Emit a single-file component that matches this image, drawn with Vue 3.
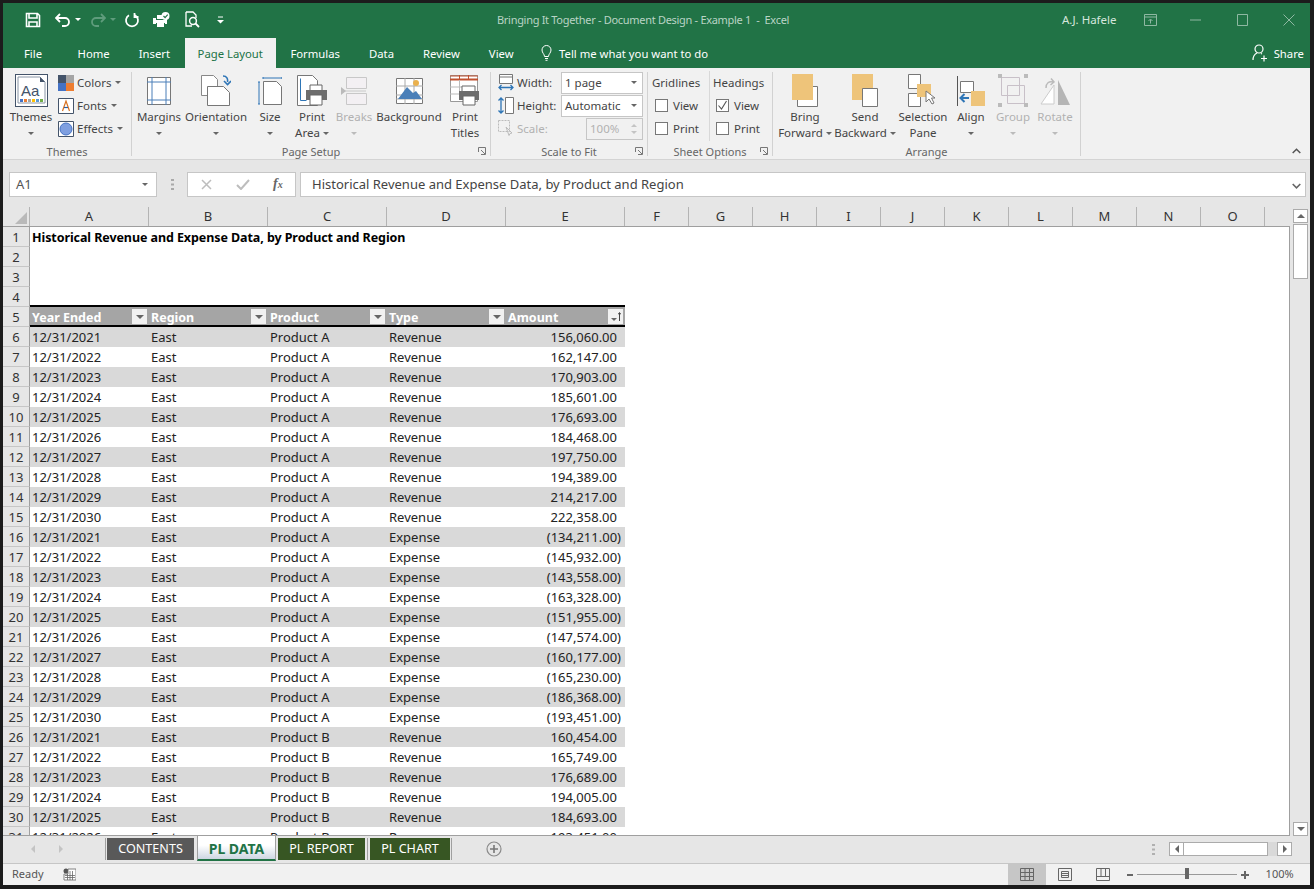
<script setup>
const tabs = ['Home', 'Insert', 'Page Layout', 'Formulas', 'Data', 'Review', 'View']
const columns = ['A', 'B', 'C', 'D', 'E', 'F', 'G', 'H', 'I', 'J', 'K', 'L', 'M', 'N', 'O']
const headers = ['Year Ended', 'Region', 'Product', 'Type', 'Amount']
const years = [2021, 2022, 2023, 2024, 2025, 2026, 2027, 2028, 2029, 2030]

const amounts = [
  '156,060.00', '162,147.00', '170,903.00', '185,601.00', '176,693.00',
  '184,468.00', '197,750.00', '194,389.00', '214,217.00', '222,358.00',
  '(134,211.00)', '(145,932.00)', '(143,558.00)', '(163,328.00)', '(151,955.00)',
  '(147,574.00)', '(160,177.00)', '(165,230.00)', '(186,368.00)', '(193,451.00)',
  '160,454.00', '165,749.00', '176,689.00', '194,005.00', '184,693.00', '193,451.00',
]

const rows = amounts.map((amount, i) => ({
  num: i + 6,
  date: `12/31/${years[i % 10]}`,
  product: i < 20 ? 'Product A' : 'Product B',
  type: i >= 10 && i < 20 ? 'Expense' : 'Revenue',
  amount,
  negative: amount.startsWith('('),
}))

const sheets = [
  { name: 'CONTENTS', cls: 'grey' },
  { name: 'PL DATA', cls: 'current' },
  { name: 'PL REPORT', cls: 'green' },
  { name: 'PL CHART', cls: 'green chart' },
]
</script>

<template>
  <div class="window">
    <!-- title bar -->
    <div class="titlebar">
      <svg class="q-save" width="16" height="16" viewBox="0 0 16 16"><path d="M1.500 1.500h11l2 2v11h-13z M4 2v4h8V2 M4 15V10h8v5" fill="none" stroke="#fff" stroke-width="1.600"/></svg>
      <svg class="q-undo" width="16" height="14" viewBox="0 0 16 14"><path d="M1 5h9a3.500 3.500 0 0 1 0 8H7 M5 1 1 5l4 4" fill="none" stroke="#fff" stroke-width="1.800"/></svg>
      <span class="caret white q-caret"></span>
      <svg class="q-redo" width="16" height="14" viewBox="0 0 16 14"><path d="M15 5H6a3.500 3.500 0 0 0 0 8h3 M11 1l4 4-4 4" fill="none" stroke="#5f9c7c" stroke-width="1.800"/></svg>
      <span class="caret dim q-caret"></span>
      <svg class="q-refresh" width="16" height="16" viewBox="0 0 16 16"><path d="M5 3.200a6 6 0 1 0 6 0 M10.500 1v4h4" fill="none" stroke="#fff" stroke-width="1.800"/></svg>
      <svg class="q-print" width="18" height="16" viewBox="0 0 18 16"><path d="M4 3h6v4H4z M0 6h3v2h9V6h2v6h-2v-1H3v1H0z M4 11h7v4H4z" fill="#fff"/><circle cx="12.500" cy="4" r="4" fill="#fff"/><path d="m10.500 4 1.600 1.600 2.600-3" fill="none" stroke="#217346" stroke-width="1.200"/></svg>
      <svg class="q-preview" width="16" height="17" viewBox="0 0 16 17"><path d="M1 1h7l3 3v3 M1 1v14h6" fill="none" stroke="#fff" stroke-width="1.300"/><circle cx="8" cy="10" r="3.400" fill="none" stroke="#fff" stroke-width="1.500"/><path d="m10.500 12.500 3.500 3.500" stroke="#fff" stroke-width="1.800"/></svg>
      <svg class="q-custom" width="7" height="8" viewBox="0 0 7 8"><path d="M1 1h5" stroke="#fff"/><path d="M0 4h7L3.500 7.500z" fill="#fff"/></svg>
      <span class="doc-title">Bringing It Together - Document Design - Example 1&nbsp; -&nbsp; Excel</span>
      <span class="user">A.J. Hafele</span>
      <svg class="w-ribbon" width="13" height="12" viewBox="0 0 13 12"><path d="M.5.500h12v11H.5z M.5 3h12 M6.500 9.500v-4 M4.500 7l2-2 2 2" fill="none" stroke="#8fb8a2"/></svg>
      <svg class="w-min" width="11" height="2" viewBox="0 0 11 2"><path d="M0 1h11" stroke="#8fb8a2"/></svg>
      <svg class="w-max" width="11" height="12" viewBox="0 0 11 12"><path d="M.5.500h10v11H.5z" fill="none" stroke="#8fb8a2"/></svg>
      <svg class="w-close" width="12" height="12" viewBox="0 0 12 12"><path d="m.5.500 11 11m0-11-11 11" stroke="#8fb8a2"/></svg>
    </div>

    <!-- ribbon tabs -->
    <div class="tabstrip">
      <span class="tab file">File</span>
      <span v-for="t in tabs" :key="t" class="tab" :class="{ active: t === 'Page Layout' }">{{ t }}</span>
      <svg class="bulb" width="11" height="16" viewBox="0 0 11 16"><path d="M3.500 11.500C3.500 9 1 8 1 5a4.500 4.500 0 0 1 9 0c0 3-2.500 4-2.500 6.500z M4 13.500h3 M4.500 15.300h2" fill="none" stroke="#fff"/></svg>
      <span class="tell">Tell me what you want to do</span>
      <svg class="share-ic" width="16" height="18" viewBox="0 0 16 18"><circle cx="7" cy="5" r="4" fill="none" stroke="#fff" stroke-width="1.200"/><path d="M1 16c0-4 2-6 4-7 M9 9.500 10 10 M9 14.500h6 M12 11.500v6" fill="none" stroke="#fff" stroke-width="1.200"/></svg>
      <span class="share">Share</span>
    </div>

    <!-- ribbon -->
    <div class="ribbon">
      <section class="group g-themes">
        <div class="body">
          <div class="big w52">
            <div class="ic">
              <svg width="33" height="33" viewBox="0 0 33 33"><rect x=".5" y=".5" width="32" height="32" fill="#fff" stroke="#44546a"/><path d="M3 3h22l5 5v21H3z" fill="#fff" stroke="#8a96a6"/><path d="M25 3v5h5z" fill="#44546a"/><text x="6" y="22" class="aa">Aa</text><path d="M5 25h3v3H5z" fill="#4472c4"/><path d="M9 25h3v3H9z" fill="#ed7d31"/><path d="M13 25h3v3h-3z" fill="#a5a5a5"/><path d="M17 25h3v3h-3z" fill="#ffc000"/><path d="M21 25h3v3h-3z" fill="#5b9bd5"/><path d="M25 25h3v3h-3z" fill="#70ad47"/></svg>
            </div>
            <div class="lbl">Themes</div>
            <div class="lbl"><span class="caret"></span></div>
          </div>
          <div class="smalls">
            <div class="small">
              <svg width="16" height="16" viewBox="0 0 16 16"><path d="M0 0h8v8H0z" fill="#44546a"/><path d="M8 0h8v8H8z" fill="#a5a5a5"/><path d="M0 8h8v8H0z" fill="#4472c4"/><path d="M8 8h8v8H8z" fill="#ed7d31"/></svg>
              <span>Colors</span><span class="caret"></span>
            </div>
            <div class="small">
              <svg width="16" height="16" viewBox="0 0 16 16"><path d="M.5.500h15v15H.5z" fill="#fff" stroke="#44546a"/><path d="M4.500 13 8 3l3.500 10" fill="none" stroke="#d9711f" stroke-width="1.200"/><path d="M6 9.500h4" stroke="#2f5f9e" stroke-width="1.200"/></svg>
              <span>Fonts</span><span class="caret"></span>
            </div>
            <div class="small">
              <svg width="16" height="16" viewBox="0 0 16 16"><path d="M.5.500h15v15H.5z" fill="#fff" stroke="#44546a"/><circle cx="8" cy="8" r="6" fill="#7f9fe0" stroke="#4472c4"/></svg>
              <span>Effects</span><span class="caret"></span>
            </div>
          </div>
        </div>
        <div class="gname">Themes</div>
      </section>

      <section class="group g-setup">
        <div class="body">
          <div class="big w54">
            <div class="ic"><svg width="24" height="28" viewBox="0 0 24 28"><path d="M.5.500h23v27H.5z" fill="#fff" stroke="#777"/><path d="M5 0v28M19 0v28M0 5h24M0 23h24" stroke="#4a7fb8"/></svg></div>
            <div class="lbl">Margins</div>
            <div class="lbl"><span class="caret"></span></div>
          </div>
          <div class="big w60">
            <div class="ic"><svg width="30" height="31" viewBox="0 0 30 31"><path d="M.5.500h12l4 4v16H.5z" fill="#fff" stroke="#888"/><path d="M6.500 11.500h16l6 6v13h-22z" fill="#fff" stroke="#777"/><path d="M22 1c4 0 5 3 4.500 6 M23 6l3.500 3.500L30 6" fill="none" stroke="#2e75b6" stroke-width="1.600"/></svg></div>
            <div class="lbl">Orientation</div>
            <div class="lbl"><span class="caret"></span></div>
          </div>
          <div class="big w48">
            <div class="ic"><svg width="24" height="28" viewBox="0 0 24 28"><path d="M5.500 4.500h13l5 5v18h-18z" fill="#fff" stroke="#777"/><path d="M5 1h19M5 0v2M24 0v2M1 5v22M0 5h2M0 27h2" stroke="#2e75b6"/></svg></div>
            <div class="lbl">Size</div>
            <div class="lbl"><span class="caret"></span></div>
          </div>
          <div class="big w36">
            <div class="ic"><svg width="31" height="32" viewBox="0 0 31 32"><path d="M.5.500h15l5 5v25H.5z" fill="#fff" stroke="#777"/><path d="M3.500 3.500v22h6" fill="none" stroke="#2e75b6"/><path d="M13 10h12v6H13z" fill="#fff" stroke="#666"/><path d="M9 15h21v10H9z" fill="#6d6d6d"/><path d="M13 20h12v10H13z" fill="#fff" stroke="#666"/></svg></div>
            <div class="lbl">Print</div>
            <div class="lbl">Area <span class="caret"></span></div>
          </div>
          <div class="big w48 off">
            <div class="ic"><svg width="26" height="28" viewBox="0 0 26 28"><path d="M5.500.500h20v11h-20z M5.500 16.500h20v11h-20z" fill="#f3f0f3" stroke="#c8c8c8"/><path d="M1 14h24" stroke="#c8c8c8"/><path d="m0 10 5 4-5 4z" fill="#bbb"/></svg></div>
            <div class="lbl">Breaks</div>
            <div class="lbl"><span class="caret light"></span></div>
          </div>
          <div class="big w62">
            <div class="ic"><svg width="27" height="26" viewBox="0 0 27 26"><path d="M.5.500h26v25H.5z" fill="#fff" stroke="#777"/><path d="M0 8h27M0 17h27M0 21h27M9 0v26M18 0v26" stroke="#aaa"/><circle cx="20" cy="5" r="3" fill="#eab14e"/><path d="M2 21 11 9l6 6 3-2 6 8z" fill="#4a7fb8"/></svg></div>
            <div class="lbl">Background</div>
          </div>
          <div class="big w50">
            <div class="ic"><svg width="30" height="31" viewBox="0 0 30 31"><path d="M.5.500h27v26H.5z" fill="#fff" stroke="#999"/><path d="M0 4.500h28" stroke="#c0502e" stroke-width="2"/><path d="M0 1h28M9.500 0v5M18.500 0v5" stroke="#c0502e"/><path d="M0 12h14M0 19h10M9.500 5v20" stroke="#bbb"/><path d="M12 11h13v6H12z" fill="#fff" stroke="#666"/><path d="M9 16h20v9H9z" fill="#6d6d6d"/><path d="M13 21h12v9H13z" fill="#fff" stroke="#666"/></svg></div>
            <div class="lbl">Print</div>
            <div class="lbl">Titles</div>
          </div>
        </div>
        <div class="gname">Page Setup</div>
        <svg class="launch" width="8" height="8" viewBox="0 0 8 8"><path d="M.5 5V.5H7.500V7.500H3 M3 3l4 4" fill="none" stroke="#777"/></svg>
      </section>

      <section class="group g-scale">
        <div class="scale-rows">
          <div class="scale-row">
            <svg width="16" height="17" viewBox="0 0 16 17"><path d="M1.500.5h13v9h-13z M1.500 3h13" fill="#fff" stroke="#777"/><path d="M1 13.500h14 M3.500 11 1 13.500 3.500 16 M12.500 11l2.500 2.500-2.500 2.500" fill="none" stroke="#2e75b6" stroke-width="1.300"/></svg>
            <span class="s-label">Width:</span>
            <span class="combo">1 page<span class="caret"></span></span>
          </div>
          <div class="scale-row">
            <svg width="16" height="17" viewBox="0 0 16 17"><path d="M7.500.5h8v16h-8z" fill="#fff" stroke="#777"/><path d="M3 1v15 M.5 3.500 3 1l2.500 2.500 M.5 13.500 3 16l2.500-2.500" fill="none" stroke="#2e75b6" stroke-width="1.300"/></svg>
            <span class="s-label">Height:</span>
            <span class="combo">Automatic<span class="caret"></span></span>
          </div>
          <div class="scale-row off">
            <svg width="16" height="17" viewBox="0 0 16 17"><path d="M.5.500h11v11H.5z" fill="none" stroke="#bbb" stroke-dasharray="2 1"/><path d="m8 7 6 6-2 .5-1 2z" fill="none" stroke="#bbb"/></svg>
            <span class="s-label">Scale:</span>
            <span class="spin">100%
              <span class="arrows"><i class="up"></i><i class="dn"></i></span>
            </span>
          </div>
        </div>
        <div class="gname">Scale to Fit</div>
        <svg class="launch" width="8" height="8" viewBox="0 0 8 8"><path d="M.5 5V.5H7.500V7.500H3 M3 3l4 4" fill="none" stroke="#777"/></svg>
      </section>

      <section class="group g-sheet">
        <div class="sheet-cols">
          <div class="opt-col first">
            <div class="opt-head">Gridlines</div>
            <label class="opt"><span class="check"></span>View</label>
            <label class="opt"><span class="check"></span>Print</label>
          </div>
          <div class="opt-col">
            <div class="opt-head">Headings</div>
            <label class="opt">
              <span class="check"><svg width="11" height="11" viewBox="0 0 11 11"><path d="m1.500 5.500 3 3.500 5-8" fill="none" stroke="#555" stroke-width="1.100"/></svg></span>View
            </label>
            <label class="opt"><span class="check"></span>Print</label>
          </div>
        </div>
        <div class="gname">Sheet Options</div>
        <svg class="launch" width="8" height="8" viewBox="0 0 8 8"><path d="M.5 5V.5H7.500V7.500H3 M3 3l4 4" fill="none" stroke="#777"/></svg>
      </section>

      <section class="group g-arrange">
        <div class="body">
          <div class="big w60">
            <div class="ic"><svg width="26" height="33" viewBox="0 0 26 33"><path d="M5.500 12.500h20v20h-20z" fill="#fff" stroke="#777"/><path d="M0 0h21v26H0z" fill="#eec47a"/></svg></div>
            <div class="lbl">Bring</div>
            <div class="lbl">Forward <span class="caret"></span></div>
          </div>
          <div class="big w60">
            <div class="ic"><svg width="26" height="33" viewBox="0 0 26 33"><path d="M0 0h21v26H0z" fill="#eec47a"/><path d="M10.500 14.500h15v18h-15z" fill="#fff" stroke="#777"/></svg></div>
            <div class="lbl">Send</div>
            <div class="lbl">Backward <span class="caret"></span></div>
          </div>
          <div class="big w56">
            <div class="ic"><svg width="30" height="33" viewBox="0 0 30 33"><path d="M.5.500h12v14H.5z M.5 19.500h12v13H.5z" fill="#fff" stroke="#777"/><path d="M9 10h14v13H9z" fill="#eec47a"/><path d="M18 17v11l3-3 3 5 2-1-2.500-5H27z" fill="#fff" stroke="#777"/></svg></div>
            <div class="lbl">Selection</div>
            <div class="lbl">Pane</div>
          </div>
          <div class="big w40">
            <div class="ic"><svg width="28" height="30" viewBox="0 0 28 30"><path d="M.5 0v30" stroke="#555"/><path d="M3.500 5.500h13v11h-13z" fill="#fff" stroke="#777"/><path d="M14 15h14v15H14z" fill="#eec47a"/><path d="M12 22H4 M7.500 18l-4 4 4 4" fill="none" stroke="#2e75b6" stroke-width="2"/></svg></div>
            <div class="lbl">Align</div>
            <div class="lbl"><span class="caret"></span></div>
          </div>
          <div class="big w44 off">
            <div class="ic"><svg width="30" height="33" viewBox="0 0 30 33"><path d="M3.500 3.500h18v18h-18z M9.500 11.500h17v18h-17z" fill="none" stroke="#c8c0c8"/><path d="M0 0h4v4H0z M26 0h4v4h-4z M0 29h4v4H0z M26 29h4v4h-4z" fill="#bbb"/></svg></div>
            <div class="lbl">Group</div>
            <div class="lbl"><span class="caret light"></span></div>
          </div>
          <div class="big w40 off">
            <div class="ic"><svg width="30" height="28" viewBox="0 0 30 28"><path d="M18 3v25h12z" fill="#b5b5b5"/><path d="M14 8 1 27h13z" fill="#fff" stroke="#ccc"/><path d="M6 11c0-5 3-7 7-6 M11 1.500 14 5l-3.500 3" fill="none" stroke="#bbb" stroke-width="1.500"/></svg></div>
            <div class="lbl">Rotate</div>
            <div class="lbl"><span class="caret light"></span></div>
          </div>
        </div>
        <div class="gname">Arrange</div>
      </section>

      <svg class="collapse" width="9" height="6" viewBox="0 0 9 6"><path d="m.7 5 3.800-3.800L8.300 5" fill="none" stroke="#555" stroke-width="1.500"/></svg>
    </div>

    <!-- formula bar -->
    <div class="formula">
      <div class="namebox">A1<span class="caret"></span></div>
      <svg class="grip" width="3" height="11" viewBox="0 0 3 11"><path d="M0 0h3v2H0zM0 4.500h3v2H0zM0 9h3v2H0z" fill="#a9a9a9"/></svg>
      <div class="fxbox">
        <svg width="11" height="11" viewBox="0 0 11 11"><path d="m1 1 9 9m0-9-9 9" stroke="#bdbdbd" stroke-width="1.500"/></svg>
        <svg width="14" height="11" viewBox="0 0 14 11"><path d="m1 6 4 4 8-9" fill="none" stroke="#bdbdbd" stroke-width="2"/></svg>
        <span class="fx">f<small>x</small></span>
      </div>
      <div class="fbar">Historical Revenue and Expense Data, by Product and Region<span class="chev"><svg width="9" height="6" viewBox="0 0 9 6"><path d="m.7 1 3.800 3.800L8.300 1" fill="none" stroke="#666" stroke-width="1.600"/></svg></span></div>
    </div>

    <!-- sheet -->
    <div class="sheet">
      <div class="gridarea">
        <div class="colheads">
          <div class="corner"><i></i></div>
          <div v-for="(c, i) in columns" :key="c" class="colhead" :class="{ wide: i < 5 }">{{ c }}</div>
        </div>
        <div class="cells">
          <div class="row">
            <div class="rownum">1</div>
            <div class="cell title">Historical Revenue and Expense Data, by Product and Region</div>
          </div>
          <div v-for="n in [2, 3, 4]" :key="n" class="row">
            <div class="rownum">{{ n }}</div>
          </div>
          <div class="row">
            <div class="rownum">5</div>
            <div class="tablehead">
              <div v-for="h in headers" :key="h" class="th">
                {{ h }}
                <span class="filter" :class="{ sorted: h === 'Amount' }">
                  <i></i>
                  <svg v-if="h === 'Amount'" width="3" height="9" viewBox="0 0 3 9"><path d="M1.500 9V1M0 2.500 1.500.5 3 2.500" fill="none" stroke="#444"/></svg>
                </span>
              </div>
            </div>
          </div>
          <div v-for="(r, i) in rows" :key="r.num" class="row">
            <div class="rownum">{{ r.num }}</div>
            <div class="tablerow" :class="{ band: i % 2 === 0 }">
              <div class="td">{{ r.date }}</div>
              <div class="td">East</div>
              <div class="td">{{ r.product }}</div>
              <div class="td">{{ r.type }}</div>
              <div class="td num" :class="{ neg: r.negative }">{{ r.amount }}</div>
            </div>
          </div>
        </div>
      </div>
      <div class="vscroll">
        <span class="sbtn"><i class="up"></i></span>
        <span class="vthumb"></span>
        <span class="vfill"></span>
        <span class="sbtn"><i class="dn"></i></span>
      </div>
    </div>

    <!-- sheet tabs -->
    <div class="tabbar">
      <span class="nav"><i class="lf"></i></span>
      <span class="nav"><i class="rt"></i></span>
      <span class="tabsep"></span>
      <span v-for="s in sheets" :key="s.name" class="stab" :class="s.cls">{{ s.name }}</span>
      <span class="tabsep end"></span>
      <svg class="plus" width="16" height="16" viewBox="0 0 16 16"><circle cx="8" cy="8" r="7" fill="none" stroke="#8a8a8a" stroke-width="1.200"/><path d="M8 4v8M4 8h8" stroke="#777" stroke-width="1.600"/></svg>
      <svg class="hgrip" width="3" height="11" viewBox="0 0 3 11"><path d="M0 0h3v2H0zM0 4.500h3v2H0zM0 9h3v2H0z" fill="#b0b0b0"/></svg>
      <div class="hscroll">
        <span class="hbtn"><i class="lf dark"></i></span>
        <span class="hthumb"></span>
        <span class="htrack"></span>
        <span class="hbtn last"><i class="rt dark"></i></span>
      </div>
    </div>

    <!-- status bar -->
    <div class="status">
      <span class="ready">Ready</span>
      <svg class="macro" width="13" height="13" viewBox="0 0 13 13"><circle cx="3" cy="3" r="2.500" fill="#555"/><path d="M5 1h8v11H1V6h4z" fill="#fff" stroke="#666" stroke-width=".8"/><path d="M2 7.500h10M2 9.500h10M4.500 6v6M7 3v9M9.500 3v9" stroke="#666" stroke-width=".8"/></svg>
      <span class="viewbtn on">
        <svg width="14" height="13" viewBox="0 0 14 13"><path d="M.5.500h13v12H.5z M.5 4.500h13 M.5 8.500h13 M5 .5v12 M9.500.5v12" fill="none" stroke="#666"/></svg>
      </span>
      <span class="viewbtn">
        <svg width="14" height="13" viewBox="0 0 14 13"><path d="M.5.500h13v12H.5z M3.500 3.500h7v6h-7z M4 5.500h6 M4 7.500h6" fill="none" stroke="#666"/></svg>
      </span>
      <span class="viewbtn">
        <svg width="14" height="13" viewBox="0 0 14 13"><path d="M.5.500h13v12H.5z M.5 8.500h13 M5 .5v8 M9.500.5v8" fill="none" stroke="#666"/></svg>
      </span>
      <div class="zoom">
        <span class="zminus"></span>
        <span class="zline"><i></i></span>
        <span class="zplus"></span>
      </div>
      <span class="pct">100%</span>
    </div>
  </div>
</template>

<style scoped>
.window {
  width: 1314px;
  height: 889px;
  box-sizing: border-box;
  padding: 3px 4px 4px 3px;
  background: #1c1c1c;
  display: flex;
  flex-direction: column;
  overflow: hidden;
  font-family: "Noto Sans", "Open Sans", sans-serif;
  color: #444;
  font-size: 11.5px;
}
i { display: block; }
svg { flex: none; }

/* small dropdown triangle */
.caret {
  display: inline-block;
  width: 0;
  height: 0;
  border: 3px solid transparent;
  border-top: 3px solid #666;
  border-bottom: 0;
  vertical-align: middle;
}
.caret.white { border-top-color: #fff; }
.caret.dim { border-top-color: #5f9c7c; }
.caret.light { border-top-color: #bbb; }

.titlebar {
  height: 35px;
  flex: none;
  box-sizing: border-box;
  padding-bottom: 2px;
  background: #217346;
  display: flex;
  align-items: center;
  color: #fff;
}
.q-save { margin-left: 22px; }
.q-undo { margin-left: 14px; }
.q-caret { margin-left: 4px; }
.q-redo { margin-left: 9px; }
.q-refresh { margin-left: 8px; }
.q-print { margin-left: 13px; }
.q-preview { margin-left: 14px; }
.q-custom { margin-left: 16px; }
.doc-title {
  margin-left: 273px;
  width: 565px;
  flex: none;
  color: #b9d4c5;
  font-size: 11px;
  letter-spacing: -0.3px;
  white-space: nowrap;
}
.user { color: #d5e6dc; font-size: 11.5px; width: 82px; flex: none; white-space: nowrap; }
.w-min { margin-left: 33px; }
.w-max { margin-left: 36px; }
.w-close { margin-left: 35px; }

.tabstrip {
  height: 30px;
  flex: none;
  box-sizing: border-box;
  padding-right: 6px;
  background: #217346;
  display: flex;
  align-items: center;
  color: #fff;
  font-size: 11.3px;
}
.tab {
  height: 30px;
  line-height: 31px;
  padding: 0 14.5px;
  white-space: nowrap;
}
.tab.file { padding: 0 21px; }
.tab.active { background: #f1f1f1; color: #217346; padding: 0 13px; }
.bulb { margin-left: 13px; }
.tell { margin-left: 7px; white-space: nowrap; }
.share-ic { margin-left: auto; }
.share { margin-left: 6px; }

.ribbon {
  height: 92px;
  flex: none;
  background: #f1f1f1;
  border-bottom: 1px solid #d4d4d4;
  box-sizing: border-box;
  display: flex;
  position: relative;
}
.group {
  position: relative;
  flex: none;
  box-sizing: border-box;
  margin: 4px 0 3px;
  border-right: 1px solid #d2d2d2;
}
.g-themes { width: 129px; padding-left: 2px; }
.g-setup { width: 359px; }
.g-scale { width: 157px; }
.g-sheet { width: 125px; }
.g-arrange { width: 308px; padding-left: 2px; }
.body { display: flex; }
.gname {
  position: absolute;
  left: 0;
  right: 0;
  bottom: -4px;
  text-align: center;
  font-size: 11px;
  line-height: 16px;
  color: #666;
}
.launch { position: absolute; right: 4px; bottom: 1px; }
.collapse { position: absolute; right: 9px; bottom: 5px; }

.big { display: flex; flex-direction: column; align-items: center; flex: none; }
.w36 { width: 36px; }
.w40 { width: 40px; }
.w44 { width: 44px; }
.w48 { width: 48px; }
.w50 { width: 50px; }
.w52 { width: 52px; }
.w54 { width: 54px; }
.w56 { width: 56px; }
.w60 { width: 60px; }
.w62 { width: 62px; }
.ic { height: 37px; display: flex; align-items: center; justify-content: center; }
.lbl { line-height: 16px; height: 16px; white-space: nowrap; }
.off { color: #b1b1b1; }
.aa { font-family: "Liberation Sans", sans-serif; font-size: 15px; fill: #44546a; }

.smalls { margin: -1px 0 0 1px; }
.small { height: 23px; display: flex; align-items: center; gap: 3px; white-space: nowrap; }
.small .caret { margin-left: 1px; }

.scale-rows { margin-top: -1px; }
.scale-row {
  display: flex;
  align-items: center;
  height: 23px;
  padding-left: 7px;
}
.s-label { margin-left: 3px; width: 44px; flex: none; }
.combo, .spin {
  box-sizing: border-box;
  height: 22px;
  background: #fff;
  border: 1px solid #c6c6c6;
  display: flex;
  align-items: center;
  justify-content: space-between;
  padding: 0 5px 0 3px;
  width: 82px;
}
.spin {
  width: 57px;
  margin-left: 25px;
  background: #f1f1f1;
  color: #b1b1b1;
}
.arrows { display: flex; flex-direction: column; gap: 4px; }
.arrows i { border: 3px solid transparent; width: 0; height: 0; }
.arrows .up { border-top: 0; border-bottom-color: #c4c4c4; }
.arrows .dn { border-bottom: 0; border-top-color: #c4c4c4; }

.sheet-cols { display: flex; height: 70px; margin-top: -1px; }
.opt-col { width: 62px; padding-left: 4px; box-sizing: border-box; }
.opt-col.first { border-right: 1px solid #d8d8d8; }
.opt-col:last-child { padding-left: 3px; }
.opt-head { height: 23px; line-height: 24px; }
.opt { display: flex; align-items: center; height: 23px; padding-left: 3px; }
.check {
  width: 13px;
  height: 13px;
  box-sizing: border-box;
  background: #fff;
  border: 1px solid #777;
  margin-right: 5px;
  display: flex;
  align-items: center;
  justify-content: center;
  flex: none;
}

.formula {
  height: 47px;
  flex: none;
  background: #e6e6e6;
  box-sizing: border-box;
  padding-top: 12px;
  display: flex;
  align-items: flex-start;
}
.namebox, .fxbox, .fbar {
  height: 25px;
  box-sizing: border-box;
  background: #fff;
  border: 1px solid #c6c6c6;
  display: flex;
  align-items: center;
  padding-bottom: 1px;
}
.namebox {
  margin-left: 6px;
  width: 148px;
  padding-left: 6px;
  padding-right: 8px;
  justify-content: space-between;
  font-size: 13px;
  color: #555;
}
.grip { margin: 7px 0 0 14px; }
.fxbox {
  margin-left: 13px;
  width: 109px;
  padding-left: 13px;
  gap: 24px;
}
.fx { font-family: "Liberation Serif", serif; font-style: italic; font-weight: bold; font-size: 14px; color: #666; margin-left: -1px; }
.fx small { font-size: 10px; }
.fbar {
  margin-left: 4px;
  width: 1006px;
  padding-left: 11px;
  padding-right: 4px;
  justify-content: space-between;
  font-size: 13px;
  color: #444;
}

.sheet {
  flex: none;
  height: 629px;
  display: flex;
  background: #e6e6e6;
}
.gridarea { width: 1287px; flex: none; display: flex; flex-direction: column; }
.colheads {
  display: flex;
  height: 20px;
  flex: none;
  box-sizing: border-box;
  border-bottom: 1px solid #9f9f9f;
  font-size: 13px;
  color: #333;
}
.corner {
  width: 27px;
  box-sizing: border-box;
  border-right: 1px solid #b4b4b4;
  position: relative;
}
.corner i {
  position: absolute;
  right: 2px;
  bottom: 2px;
  border-style: solid;
  border-width: 0 0 12px 12px;
  border-color: transparent transparent #b9b9b9 transparent;
}
.colhead {
  width: 64px;
  box-sizing: border-box;
  border-right: 1px solid #b4b4b4;
  text-align: center;
  line-height: 19px;
}
.colhead.wide { width: 119px; }

.cells {
  flex: 1;
  min-height: 0;
  overflow: hidden;
  background: #fff;
  border-right: 1px solid #9f9f9f;
  border-bottom: 1px solid #9f9f9f;
  font-size: 13px;
  color: #222;
}
.row { display: flex; height: 20px; }
.rownum {
  width: 27px;
  flex: none;
  box-sizing: border-box;
  background: #e6e6e6;
  border-right: 1px solid #9f9f9f;
  border-bottom: 1px solid #c6c6c6;
  text-align: center;
  line-height: 20px;
  color: #333;
}
.cell.title {
  padding-left: 2px;
  font-weight: bold;
  font-size: 12.5px;
  letter-spacing: -0.08px;
  line-height: 22px;
  white-space: nowrap;
  color: #000;
}

.tablehead, .tablerow {
  display: grid;
  grid-template-columns: repeat(5, 119px);
  height: 20px;
}
.tablehead {
  background: #a5a5a5;
  box-sizing: border-box;
  height: 22px;
  margin-top: -2px;
  border-top: 2px solid #000;
  border-bottom: 2px solid #000;
  position: relative;
  z-index: 1;
}
.th {
  position: relative;
  color: #fff;
  font-weight: bold;
  font-size: 12.5px;
  padding-left: 2px;
  line-height: 22px;
  height: 18px;
}
.filter {
  position: absolute;
  right: 2px;
  top: 2px;
  width: 15px;
  height: 15px;
  background: #f1f1f1;
  display: flex;
  align-items: center;
  justify-content: center;
  gap: 1px;
}
.filter i {
  width: 0;
  height: 0;
  border: 4px solid transparent;
  border-top: 4px solid #666;
  border-bottom: 0;
}
.filter.sorted i { border-width: 3px 3px 0; margin-top: 6px; }
.tablerow.band { background: #d9d9d9; }
.td { padding-left: 2px; line-height: 20px; white-space: nowrap; }
.td.num { text-align: right; padding-right: 8px; }
.td.num.neg { padding-right: 4px; }

.vscroll {
  width: 20px;
  flex: none;
  box-sizing: border-box;
  padding: 2px 2px 0 3px;
  display: flex;
  flex-direction: column;
  gap: 1px;
}
.sbtn {
  height: 14px;
  flex: none;
  box-sizing: border-box;
  background: #fff;
  border: 1px solid #ababab;
  display: flex;
  align-items: center;
  justify-content: center;
}
.sbtn i { border: 4px solid transparent; width: 0; height: 0; }
.sbtn .up { border-top: 0; border-bottom-color: #666; }
.sbtn .dn { border-bottom: 0; border-top-color: #666; }
.vthumb { height: 55px; flex: none; box-sizing: border-box; background: #fff; border: 1px solid #ababab; }
.vfill { flex: 1; }

.tabbar {
  height: 27px;
  flex: none;
  background: #e6e6e6;
  display: flex;
  align-items: flex-start;
  position: relative;
  font-size: 12.6px;
}
.nav { width: 28px; height: 22px; margin-top: 2px; display: flex; align-items: center; justify-content: center; }
.nav:first-child { margin-left: 16px; }
.lf, .rt { width: 0; height: 0; border: 4px solid transparent; }
.lf { border-left: 0; border-right-color: #c4c4c4; }
.rt { border-right: 0; border-left-color: #c4c4c4; }
.lf.dark { border-right-color: #666; }
.rt.dark { border-left-color: #666; }
.tabsep { width: 1px; height: 22px; background: #9f9f9f; margin: 2px 0 0 30px; }
.tabsep.end { margin-left: 1px; }
.stab {
  height: 22px;
  box-sizing: border-box;
  margin-top: 2px;
  margin-left: 1px;
  line-height: 21px;
  color: #fff;
  text-align: center;
  white-space: nowrap;
}
.stab.grey { background: #595959; width: 87px; }
.stab.green { background: #375623; margin-left: 2px; width: 87px; }
.stab.chart { position: relative; margin-left: 5px; width: 80px; }
.stab.chart::before {
  content: '';
  position: absolute;
  left: -3px;
  top: 0;
  width: 1px;
  height: 100%;
  background: #9f9f9f;
}
.stab.current {
  height: 25px;
  width: 79px;
  margin-top: 0;
  margin-left: 3px;
  padding-top: 1px;
  color: #217346;
  font-weight: bold;
  font-size: 14px;
  line-height: 23px;
  background: linear-gradient(#fff 40%, #cdd6e2);
  border: 1px solid #9f9f9f;
  border-top: 0;
  border-bottom: 2px solid #217346;
}
.plus { margin: 5px 0 0 34px; }
.hgrip { position: absolute; left: 1149px; top: 8px; }
.hscroll {
  position: absolute;
  left: 1166px;
  top: 6px;
  width: 123px;
  height: 14px;
  display: flex;
}
.hbtn {
  width: 15px;
  box-sizing: border-box;
  background: #fff;
  border: 1px solid #ababab;
  display: flex;
  align-items: center;
  justify-content: center;
  flex: none;
}
.hthumb { width: 84px; box-sizing: border-box; background: #fff; border: 1px solid #ababab; border-left: 0; }
.htrack { width: 9px; background: #d9d9d9; }

.status {
  height: 22px;
  flex: none;
  box-sizing: border-box;
  background: #f1f1f1;
  border-top: 1px solid #c6c6c6;
  display: flex;
  align-items: center;
  position: relative;
}
.ready { margin: 0 0 3px 9px; font-size: 11px; color: #555; }
.macro { margin-left: 19px; }
.viewbtn {
  width: 38px;
  height: 21px;
  display: flex;
  align-items: center;
  justify-content: center;
}
.viewbtn.on { background: #c6c6c6; margin-left: 932px; }
.zoom { display: flex; align-items: center; margin-left: 5px; }
.zminus { width: 6px; height: 2px; background: #666; }
.zline { width: 100px; height: 1px; background: #999; margin: 0 4px; position: relative; }
.zline i { position: absolute; left: 48px; top: -6px; width: 4px; height: 11px; background: #666; }
.zplus {
  width: 8px;
  height: 8px;
  background: linear-gradient(#666, #666) center / 8px 2px no-repeat, linear-gradient(#666, #666) center / 2px 8px no-repeat;
}
.pct { margin: 0 0 3px 17px; font-size: 11px; color: #555; white-space: nowrap; }
</style>

<style>
html, body { margin: 0; padding: 0; background: #1c1c1c; }
</style>
